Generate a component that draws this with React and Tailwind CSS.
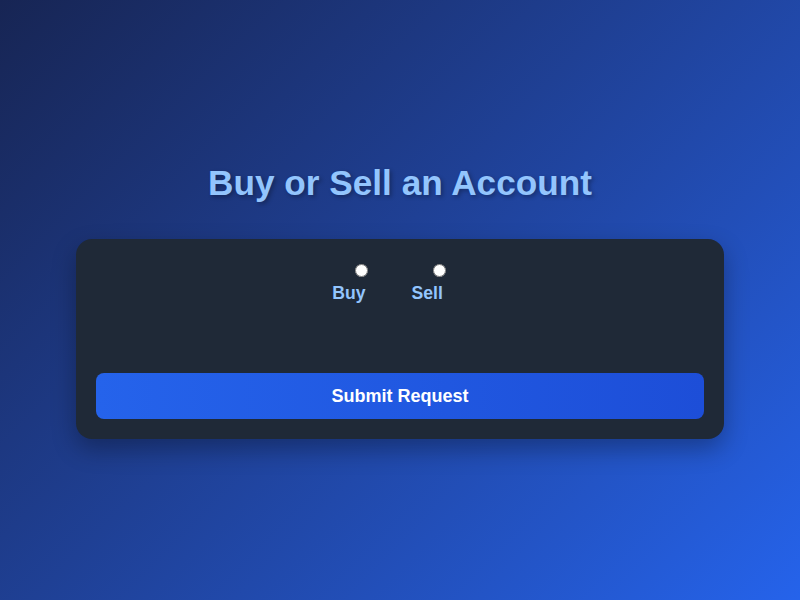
import { useState } from "react";

export default function App() {
  const [mode, setMode] = useState("");

  return (
    <div className="min-h-screen w-full pt-[2px] flex flex-col items-center justify-center bg-linear-135 from-[#172554] to-[#2563eb] font-['Liberation_Sans',Arial,sans-serif]">
      <h1 className="text-[35.2px] leading-[40px] font-bold text-[#93c5fd] [text-shadow:2px_2px_4px_rgba(0,0,0,0.3)] mb-[36px]">
        Buy or Sell an Account
      </h1>

      <form
        className="w-[648px] bg-[#1f2937] rounded-2xl p-5 shadow-[0_10px_25px_rgba(0,0,0,0.3)]"
        onSubmit={(e) => e.preventDefault()}
      >
        <div className="flex justify-center gap-[46px] pr-[25px] pt-[5px]">
          <label className="flex flex-col items-end cursor-pointer">
            <input
              type="radio"
              name="mode"
              value="buy"
              checked={mode === "buy"}
              onChange={() => setMode("buy")}
              className="m-0 mr-[-3px] w-[13px] h-[13px]"
            />
            <span className="mt-[6px] text-[17.6px] leading-[20px] font-bold text-[#93c5fd]">Buy</span>
          </label>
          <label className="flex flex-col items-end cursor-pointer">
            <input
              type="radio"
              name="mode"
              value="sell"
              checked={mode === "sell"}
              onChange={() => setMode("sell")}
              className="m-0 mr-[-3px] w-[13px] h-[13px]"
            />
            <span className="mt-[6px] text-[17.6px] leading-[20px] font-bold text-[#93c5fd]">Sell</span>
          </label>
        </div>

        <button
          type="submit"
          className="mt-[70px] w-full py-3 rounded-lg bg-linear-to-r from-[#2563eb] to-[#1d4ed8] text-white text-[18px] leading-[22px] font-bold"
        >
          Submit Request
        </button>
      </form>
    </div>
  );
}
